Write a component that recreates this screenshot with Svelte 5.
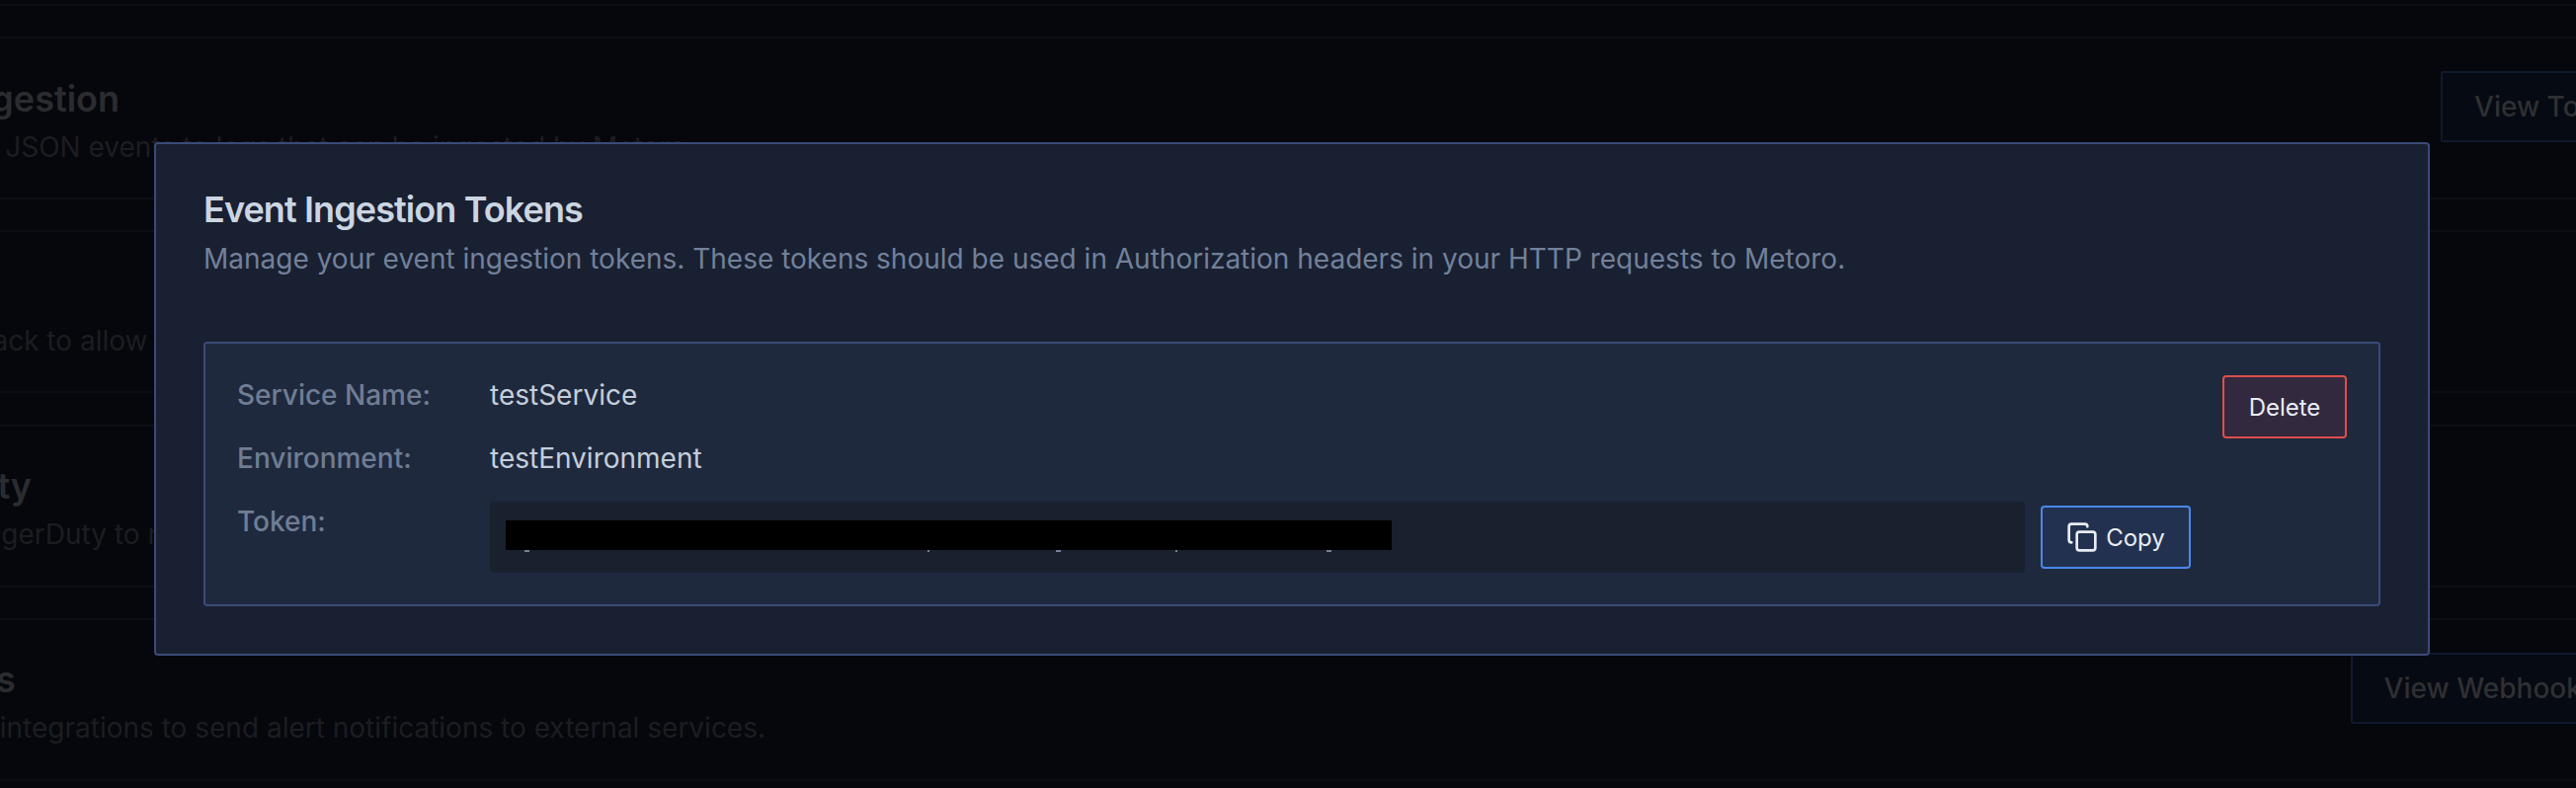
<script lang="ts">
  const rows = [
    { title: 'Event Ingestion', desc: 'Parsers for JSON events to logs that can be ingested by Metoro.', action: 'View Tokens', right: 191 },
    { title: 'Slack', desc: 'Activate Slack to allow alert notifications.', action: '', right: 0 },
    { title: 'Pagerduty', desc: 'Activate PagerDuty to notify on-call.', action: 'Connect', right: 111, tall: true },
    { title: 'Channels', desc: 'Webhooks integrations to send alert notifications to external services.', action: 'View Webhooks', right: 237 }
  ];

  // descender bits of the token that stick out below the redaction
  const ticks = [
    { left: 35, width: 5 },
    { left: 443, width: 2 },
    { left: 573, width: 5 },
    { left: 694, width: 2 },
    { left: 847, width: 5 }
  ];
</script>

<div class="page">
  <div class="top-rule"></div>
  {#each rows as row}
    <section class="row">
      <div class="info">
        <h3>{row.title}</h3>
        <p>{row.desc}</p>
      </div>
      {#if row.action}
        <button type="button" class="ghost" class:tall={row.tall} style="margin-right: {row.right}px">{row.action}</button>
      {/if}
    </section>
  {/each}
</div>

<div class="backdrop">
  <div class="modal">
    <h2>Event Ingestion Tokens</h2>
    <p class="sub">Manage your event ingestion tokens. These tokens should be used in Authorization headers in your HTTP requests to Metoro.</p>

    <div class="card">
      <dl class="fields">
        <dt>Service Name:</dt>
        <dd>testService</dd>
        <dt>Environment:</dt>
        <dd>testEnvironment</dd>
        <dt>Token:</dt>
        <dd class="token-row">
          <div class="token">
            <span class="redact"></span>
            {#each ticks as tick}
              <i class="tick" style="left: {tick.left}px; width: {tick.width}px"></i>
            {/each}
          </div>
          <button type="button" class="copy">
            <svg width="32" height="32" viewBox="0 0 24 24" fill="none" stroke="currentColor" stroke-width="2" stroke-linecap="round" stroke-linejoin="round">
              <rect x="8" y="8" width="14" height="14" rx="2" />
              <path d="M4 16c-1.100 0-2-.9-2-2V4c0-1.100.9-2 2-2h10c1.100 0 2 .9 2 2" />
            </svg>
            Copy
          </button>
        </dd>
      </dl>
      <button type="button" class="delete">Delete</button>
    </div>
  </div>
</div>

<style>
  :global(body) {
    margin: 0;
    background: #05070c;
    overflow: hidden;
    font-family: Inter, "Liberation Sans", sans-serif;
  }

  .page {
    width: 3048px;
    margin-left: -148px;
    padding-top: 4px;
  }

  .top-rule {
    height: 2px;
    background: #0c0e17;
  }

  .row {
    height: 165px;
    margin-top: 31.2px;
    padding-top: 4px;
    border-top: 2px solid #0c0e17;
    border-bottom: 2px solid #0c0e17;
    display: flex;
    justify-content: space-between;
    align-items: center;
    box-sizing: border-box;
  }

  .info h3 {
    margin: 0 0 10px;
    font-size: 36px;
    font-weight: 600;
    color: #2b2c30;
  }

  .info p {
    margin: 0;
    font-size: 28px;
    color: #1c1d22;
  }

  .ghost {
    align-self: flex-start;
    margin-top: 29px;
    height: 72px;
    padding: 0 32px;
    background: #060a12;
    border: 2px solid #0e1a2e;
    border-radius: 2px;
    color: #2f3033;
    font: 500 28px Inter, sans-serif;
  }

  .ghost.tall {
    height: 76px;
  }

  .backdrop {
    position: fixed;
    inset: 0;
  }

  .modal {
    position: absolute;
    left: 156px;
    top: 144px;
    width: 2304px;
    box-sizing: border-box;
    padding: 44px 48px 48px;
    background: #192031;
    border: 2px solid #3a4b78;
    border-radius: 4px;
  }

  h2 {
    margin: 0;
    font-size: 36px;
    line-height: 44px;
    font-weight: 600;
    color: #cbd5e1;
    letter-spacing: -0.9px;
  }

  .sub {
    margin: 8px 0 64px;
    font-size: 28px;
    line-height: 40px;
    color: #72819b;
  }

  .card {
    height: 268px;
    box-sizing: border-box;
    display: flex;
    justify-content: space-between;
    align-items: flex-start;
    padding: 32px;
    background: #1f293d;
    border: 2px solid #3a4b78;
    border-radius: 4px;
  }

  .fields {
    margin: 0;
    display: grid;
    grid-template-columns: 256px 1fr;
    row-gap: 24px;
    flex: 1;
    font-size: 28px;
    line-height: 40px;
  }

  dt {
    color: #6f7d94;
    font-weight: 500;
  }

  dd {
    margin: 0;
    color: #c4cedb;
  }

  .token-row {
    display: flex;
    align-items: center;
    gap: 16px;
    margin-right: 32px;
  }

  .token {
    position: relative;
    flex: 1;
    height: 72px;
    box-sizing: border-box;
    padding: 19px 16px;
    background: #19212f;
    border-radius: 4px;
  }

  .redact {
    display: block;
    width: 897px;
    height: 30px;
    background: #000;
  }

  .tick {
    position: absolute;
    top: 49px;
    height: 2px;
    background: #76829a;
  }

  button {
    font-family: Inter, sans-serif;
    box-sizing: border-box;
  }

  .copy {
    width: 152px;
    height: 64px;
    display: flex;
    align-items: center;
    justify-content: center;
    gap: 8px;
    background: #233150;
    border: 2px solid #4a88ea;
    border-radius: 4px;
    color: #e8edf4;
    font-size: 24px;
  }

  .delete {
    width: 126px;
    height: 64px;
    background: #33293f;
    border: 2px solid #dc4f4b;
    border-radius: 4px;
    color: #e8edf4;
    font-size: 24px;
  }
</style>
